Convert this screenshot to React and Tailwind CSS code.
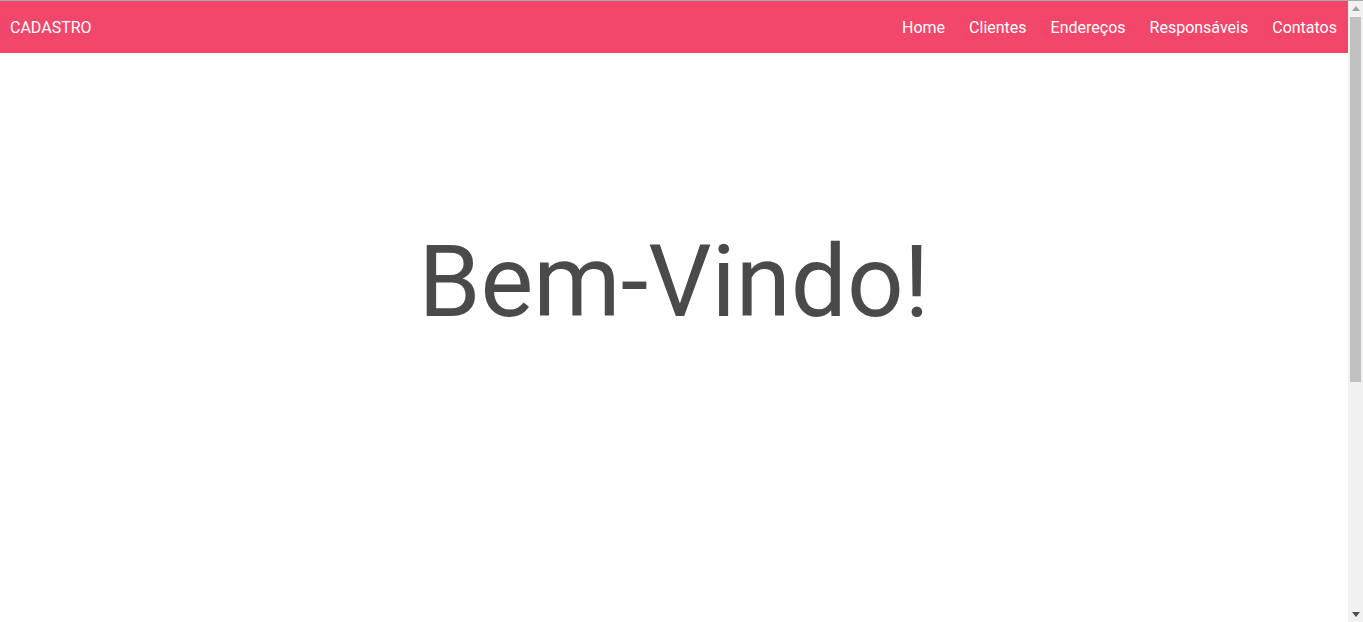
const LINKS = ["Home", "Clientes", "Endereços", "Responsáveis", "Contatos"];

function Scrollbar() {
  return (
    <div className="w-[15px] shrink-0 bg-[#f1f1f1] flex flex-col items-center">
      <div className="h-[15px] flex items-center justify-center">
        <svg width="8" height="5" viewBox="0 0 8 5"><path d="M4 0 L8 5 L0 5 Z" fill="#a3a3a3" /></svg>
      </div>
      <div className="w-[11px] h-[365px] bg-[#c1c1c1] mt-[1px]" />
      <div className="flex-1" />
      <div className="h-[15px] flex items-center justify-center">
        <svg width="8" height="5" viewBox="0 0 8 5"><path d="M0 0 L8 0 L4 5 Z" fill="#505050" /></svg>
      </div>
    </div>
  );
}

export default function App() {
  return (
    <div className="h-[622px] overflow-hidden flex bg-white font-['Roboto',sans-serif] border-t border-[#a9a9a9]">
      <div className="flex-1 min-w-0">
        <nav className="h-[52px] bg-[#f2466a] flex items-center justify-between pt-[2px]">
          <a className="pl-[10px] text-white text-base">CADASTRO</a>
          <ul className="flex h-full items-center -mr-px">
            {LINKS.map((l) => (
              <li key={l}>
                <a className="px-3 text-white text-base">{l}</a>
              </li>
            ))}
          </ul>
        </nav>
        <div className="pt-[180px] text-center">
          <h1 className="text-[99.6px] leading-none text-[#4a4a4a]">Bem-Vindo!</h1>
        </div>
      </div>
      <Scrollbar />
    </div>
  );
}
